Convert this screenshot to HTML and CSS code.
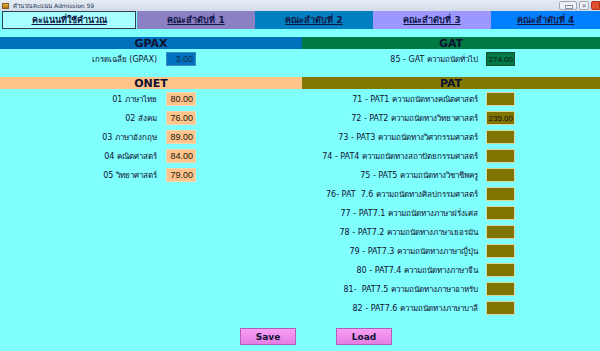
FILE: index.html
```html
<!DOCTYPE html>
<html lang="th">
<head>
<meta charset="utf-8">
<title>Admission 59</title>
<link rel="stylesheet" href="styles.css">
</head>
<body>
<div class="window">
  <div class="titlebar">
    <span class="app-icon"></span>
    <span class="title">คำนวณคะแนน Admission 59</span>
    <div class="controls">
      <span class="ctl ctl-min"></span>
      <span class="ctl ctl-x">✕</span>
      <span class="ctl ctl-close"></span>
    </div>
  </div>
  <div class="tabs">
    <div class="tab tab-1">คะแนนที่ใช้คำนวณ</div>
    <div class="tab tab-2">คณะลำดับที่ 1</div>
    <div class="tab tab-3">คณะลำดับที่ 2</div>
    <div class="tab tab-4">คณะลำดับที่ 3</div>
    <div class="tab tab-5">คณะลำดับที่ 4</div>
  </div>
  <div class="content">
    <div class="col col-left">
      <div class="hdr hdr-gpax">GPAX</div>
      <div class="rows rows-single">
        <div class="row"><span class="lbl">เกรดเฉลี่ย (GPAX)</span><span class="box box-gpax">3.00</span></div>
      </div>
      <div class="hdr hdr-onet">ONET</div>
      <div class="rows">
        <div class="row"><span class="lbl">01 ภาษาไทย</span><span class="box box-onet">80.00</span></div>
        <div class="row"><span class="lbl">02 สังคม</span><span class="box box-onet">76.00</span></div>
        <div class="row"><span class="lbl">03 ภาษาอังกฤษ</span><span class="box box-onet">89.00</span></div>
        <div class="row"><span class="lbl">04 คณิตศาสตร์</span><span class="box box-onet">84.00</span></div>
        <div class="row"><span class="lbl">05 วิทยาศาสตร์</span><span class="box box-onet">79.00</span></div>
      </div>
    </div>
    <div class="col col-right">
      <div class="hdr hdr-gat">GAT</div>
      <div class="rows rows-single">
        <div class="row"><span class="lbl">85 - GAT ความถนัดทั่วไป</span><span class="box box-gat">274.00</span></div>
      </div>
      <div class="hdr hdr-pat">PAT</div>
      <div class="rows">
        <div class="row"><span class="lbl">71 - PAT1 ความถนัดทางคณิตศาสตร์</span><span class="box box-pat"></span></div>
        <div class="row"><span class="lbl">72 - PAT2 ความถนัดทางวิทยาศาสตร์</span><span class="box box-pat">235.00</span></div>
        <div class="row"><span class="lbl">73 - PAT3 ความถนัดทางวิศวกรรมศาสตร์</span><span class="box box-pat"></span></div>
        <div class="row"><span class="lbl">74 - PAT4 ความถนัดทางสถาปัตยกรรมศาสตร์</span><span class="box box-pat"></span></div>
        <div class="row"><span class="lbl">75 - PAT5 ความถนัดทางวิชาชีพครู</span><span class="box box-pat"></span></div>
        <div class="row"><span class="lbl">76- PAT &nbsp;7.6 ความถนัดทางศิลปกรรมศาสตร์</span><span class="box box-pat"></span></div>
        <div class="row"><span class="lbl">77 - PAT7.1 ความถนัดทางภาษาฝรั่งเศส</span><span class="box box-pat"></span></div>
        <div class="row"><span class="lbl">78 - PAT7.2 ความถนัดทางภาษาเยอรมัน</span><span class="box box-pat"></span></div>
        <div class="row"><span class="lbl">79 - PAT7.3 ความถนัดทางภาษาญี่ปุ่น</span><span class="box box-pat"></span></div>
        <div class="row"><span class="lbl">80 - PAT7.4 ความถนัดทางภาษาจีน</span><span class="box box-pat"></span></div>
        <div class="row"><span class="lbl">81- &nbsp;PAT7.5 ความถนัดทางภาษาอาหรับ</span><span class="box box-pat"></span></div>
        <div class="row"><span class="lbl">82 - PAT7.6 ความถนัดทางภาษาบาลี</span><span class="box box-pat"></span></div>
      </div>
    </div>
  </div>
  <div class="actions">
    <button class="btn">Save</button>
    <button class="btn">Load</button>
  </div>
</div>
</body>
</html>
```
FILE: styles.css
```css
* { box-sizing: border-box; }
html, body { margin: 0; padding: 0; }
body {
  width: 600px;
  height: 351px;
  overflow: hidden;
  background: #80ffff;
  font-family: Tahoma, "DejaVu Sans", "Noto Sans", sans-serif;
  color: #101030;
}
.window { width: 600px; height: 351px; display: flex; flex-direction: column; background: #80ffff; }

.titlebar {
  height: 11px;
  display: flex;
  align-items: center;
  background: linear-gradient(#e6ecf4, #d4dce8);
  padding-left: 2px;
}
.app-icon {
  width: 7px; height: 6px;
  background: linear-gradient(#e8b040, #b07010);
  border: 1px solid #806020;
  margin-right: 4px;
}
.title { font-size: 6px; color: #203050; white-space: nowrap; }
.controls { margin-left: auto; display: flex; align-items: center; gap: 2px; height: 11px; }
.ctl { height: 9px; border: 1px solid #a0a8b8; border-radius: 2px; background: #eef0f4; font-size: 6px; line-height: 7px; text-align: center; color: #606878; }
.ctl-min { width: 18px; position: relative; }
.ctl-min::after { content: ""; position: absolute; left: 5px; top: 3px; width: 6px; height: 2px; border: 1px solid #8890a0; }
.ctl-x { width: 10px; }
.ctl-close { width: 9px; background: #e05030; border-color: #b03018; border-radius: 2px 0 0 2px; }

.tabs { height: 18px; display: flex; padding-left: 2px; }
.tab {
  height: 18px;
  display: flex; align-items: center; justify-content: center;
  font-size: 9px; font-weight: bold; text-decoration: underline;
  color: #101848;
}
.tab-1 { width: 134px; background: #a8ffff; border: 1px solid #304050; }
.tab-2 { width: 118px; background: #8c80c4; margin-left: 1px; }
.tab-3 { width: 118px; background: #0080c0; }
.tab-4 { width: 118px; background: #9c98ff; }
.tab-5 { flex: 1; background: #0080ff; }

.content { display: flex; padding-top: 8px; }
.col { display: flex; flex-direction: column; }
.col-left { width: 302px; }
.col-right { flex: 1; }

.hdr {
  height: 12px;
  display: flex; align-items: center; justify-content: center;
  font-size: 11px; font-weight: bold; color: #101030;
}
.hdr-gpax { background: #0070bc; }
.hdr-gat { background: #007a44; }
.hdr-onet { background: #ffc488; }
.hdr-pat { background: #807800; }

.rows { display: flex; flex-direction: column; gap: 5px; padding-top: 3px; }
.rows-single { padding-top: 3px; height: 28px; }
.row { display: flex; align-items: center; height: 14px; font-size: 8px; }
.lbl { text-align: right; white-space: nowrap; }
.col-left .lbl { width: 157px; margin-right: 9px; }
.col-right .lbl { width: 176px; margin-right: 8px; }

.box {
  height: 14px;
  display: flex; align-items: center; justify-content: flex-end;
  padding-right: 1px;
  font-family: "Liberation Sans", Arial, sans-serif;
  font-size: 8px;
  white-space: nowrap;
}
.col-left .box { width: 30px; padding-right: 2px; font-size: 9px; }
.col-right .box { width: 29px; }
.box-gpax { background: #0070c0; border: 1px solid #3e8ab8; color: #143050; }
.box-onet { background: #ffc48c; border: 1px solid #f4d8b0; color: #201810; }
.box-gat { background: #007a44; border: 1px solid #1c4a30; color: #101010; }
.box-pat { background: #807400; border: 1px solid #d8d8a0; color: #101010; }

.actions { display: flex; justify-content: center; gap: 40px; margin-top: auto; padding-bottom: 6px; padding-left: 32px; }
.btn {
  width: 56px; height: 17px;
  padding: 0;
  border: 1px solid #b060b8;
  background: linear-gradient(#f8a0f4, #e47ee4);
  font-family: Tahoma, "DejaVu Sans", sans-serif;
  font-size: 9px; font-weight: bold; color: #101030;
}
```
